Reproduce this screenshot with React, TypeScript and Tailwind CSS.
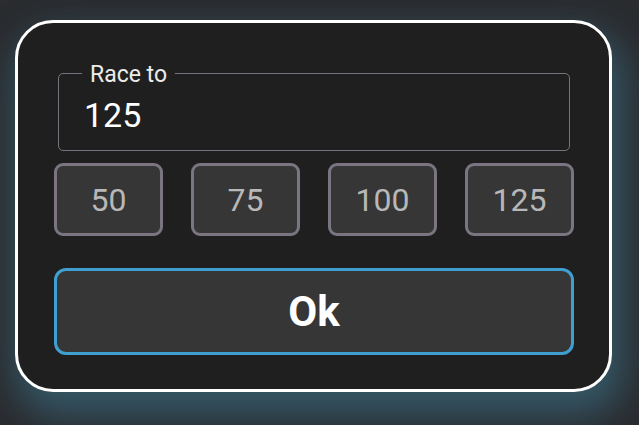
import { useState } from "react";

const presets = [50, 75, 100, 125];

export default function App() {
  const [value, setValue] = useState("125");

  return (
    <div
      className="w-[639px] h-[425px] overflow-hidden bg-[#2a2c2f] pt-[20px] pl-[15px]"
      style={{ fontFamily: "Roboto, 'Liberation Sans', sans-serif" }}
    >
      {/* Dialog */}
      <div className="w-[597px] h-[372px] rounded-[38px] border-[3px] border-white bg-[#1f1f1f] pt-[50px] pl-[36px] pr-[35px] shadow-[6px_18px_36px_6px_rgba(62,122,148,0.55)]">
        {/* Outlined text field */}
        <div className="relative mx-[4px] h-[78px] rounded-[5px] border border-[#77727b]">
          <span className="absolute left-[23px] -top-[11px] bg-[#1f1f1f] px-[8px] text-[23px] leading-none text-[#ececec]">
            Race to
          </span>
          <input
            value={value}
            onChange={(e) => setValue(e.target.value)}
            className="w-full bg-transparent pl-[25px] pt-[21px] text-[34px] leading-none text-white outline-none"
          />
        </div>

        {/* Preset buttons */}
        <div className="mt-[12px] grid grid-cols-4 gap-[28px]">
          {presets.map((p) => (
            <button
              key={p}
              type="button"
              onClick={() => setValue(String(p))}
              className="flex h-[73px] items-center justify-center rounded-[9px] border-[3px] border-[#7a7580] bg-[#363636] text-[32px] leading-none text-[#b8b8b8]"
            >
              {p}
            </button>
          ))}
        </div>

        {/* Ok */}
        <button
          type="button"
          className="mt-[32px] flex h-[87px] w-full items-center justify-center rounded-[12px] border-[3px] border-[#3f9fd1] bg-[#363636] text-[42px] font-bold leading-none text-white"
        >
          Ok
        </button>
      </div>
    </div>
  );
}
